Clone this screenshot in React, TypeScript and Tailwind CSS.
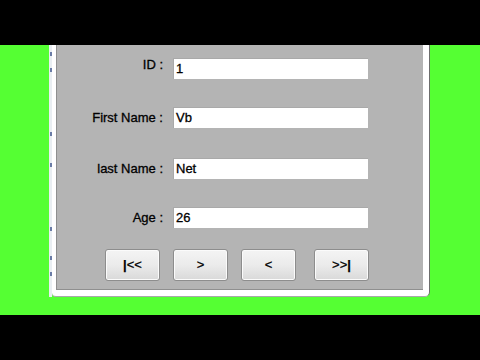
import React from 'react'

type Field = { label: string; value: string; mt: string; labelShift?: string }

const fields: Field[] = [
  { label: 'ID :', value: '1', mt: 'mt-[13px]', labelShift: '-translate-y-[4px]' },
  { label: 'First Name :', value: 'Vb', mt: 'mt-[28px]' },
  { label: 'last Name :', value: 'Net', mt: 'mt-[30px]' },
  { label: 'Age :', value: '26', mt: 'mt-[28px]' },
]

function NavButton({ children, className = '' }: { children: React.ReactNode; className?: string }) {
  return (
    <button
      className={`h-[32px] w-[55px] rounded-[3px] border border-[#8d8d8d] bg-gradient-to-b from-[#f4f4f4] via-[#ebebeb] to-[#d9d9d9] text-[13px] text-black [-webkit-text-stroke:0.25px_#000] shadow-[inset_0_0_0_1px_#fbfbfb] flex items-center justify-center ${className}`}
    >
      {children}
    </button>
  )
}

// tiny bits of the window behind, peeking out on the left edge
const marks = ['mt-[7px]', 'mt-[12px]', 'mt-[60px]', 'mt-[27px]', 'mt-[60px]', 'mt-[25px]', 'mt-[12px]']

export default function App() {
  return (
    <div
      className="w-[480px] h-[360px] bg-black flex flex-col"
      style={{ fontFamily: '"Liberation Sans", Arial, sans-serif' }}
    >
      <div className="h-[45px] shrink-0" />

      <div className="h-[270px] bg-[#55ff33] pl-[49px]">
        <div className="flex h-[252px] w-[381px]">
          {/* sliver of background window */}
          <div className="w-[3px] bg-[#e9eef2] flex flex-col items-center">
            {marks.map((m, i) => (
              <span key={i} className={`${m} block w-[2px] h-[4px] bg-[#6a7ca6]`} />
            ))}
          </div>

          <div className="flex-1 bg-white rounded-br-[5px] rounded-bl-[4px] border-r border-b border-r-[#6e6e6e] border-b-[#a8a8a8] pl-[4px] pr-[6px] pb-[6px]">
            <div className="h-full bg-[#b4b4b4] border-l border-b border-[#8f8f8f] flex flex-col">
              {fields.map((f) => (
                <div key={f.label} className={`flex items-center ${f.mt}`}>
                  <span
                    className={`w-[106px] text-right text-[13px] text-black [-webkit-text-stroke:0.3px_#000] ${f.labelShift ?? ''}`}
                  >
                    {f.label}
                  </span>
                  <div className="ml-[10px] h-[21px] w-[195px] bg-white border-t border-l border-[#a9a9a9] pl-[2px] flex items-center text-[13px] text-black [-webkit-text-stroke:0.3px_#000]">
                    {f.value}
                  </div>
                </div>
              ))}

              <div className="flex mt-[21px] pl-[48px]">
                <NavButton>
                  <span className="font-bold">|</span>
                  <span>&lt;&lt;</span>
                </NavButton>
                <NavButton className="ml-[13px]">&gt;</NavButton>
                <NavButton className="ml-[13px] w-[54px]">&lt;</NavButton>
                <NavButton className="ml-[18px]">
                  <span>&gt;&gt;</span>
                  <span className="font-bold">|</span>
                </NavButton>
              </div>
            </div>
          </div>
        </div>
      </div>

      <div className="h-[45px] shrink-0" />
    </div>
  )
}
